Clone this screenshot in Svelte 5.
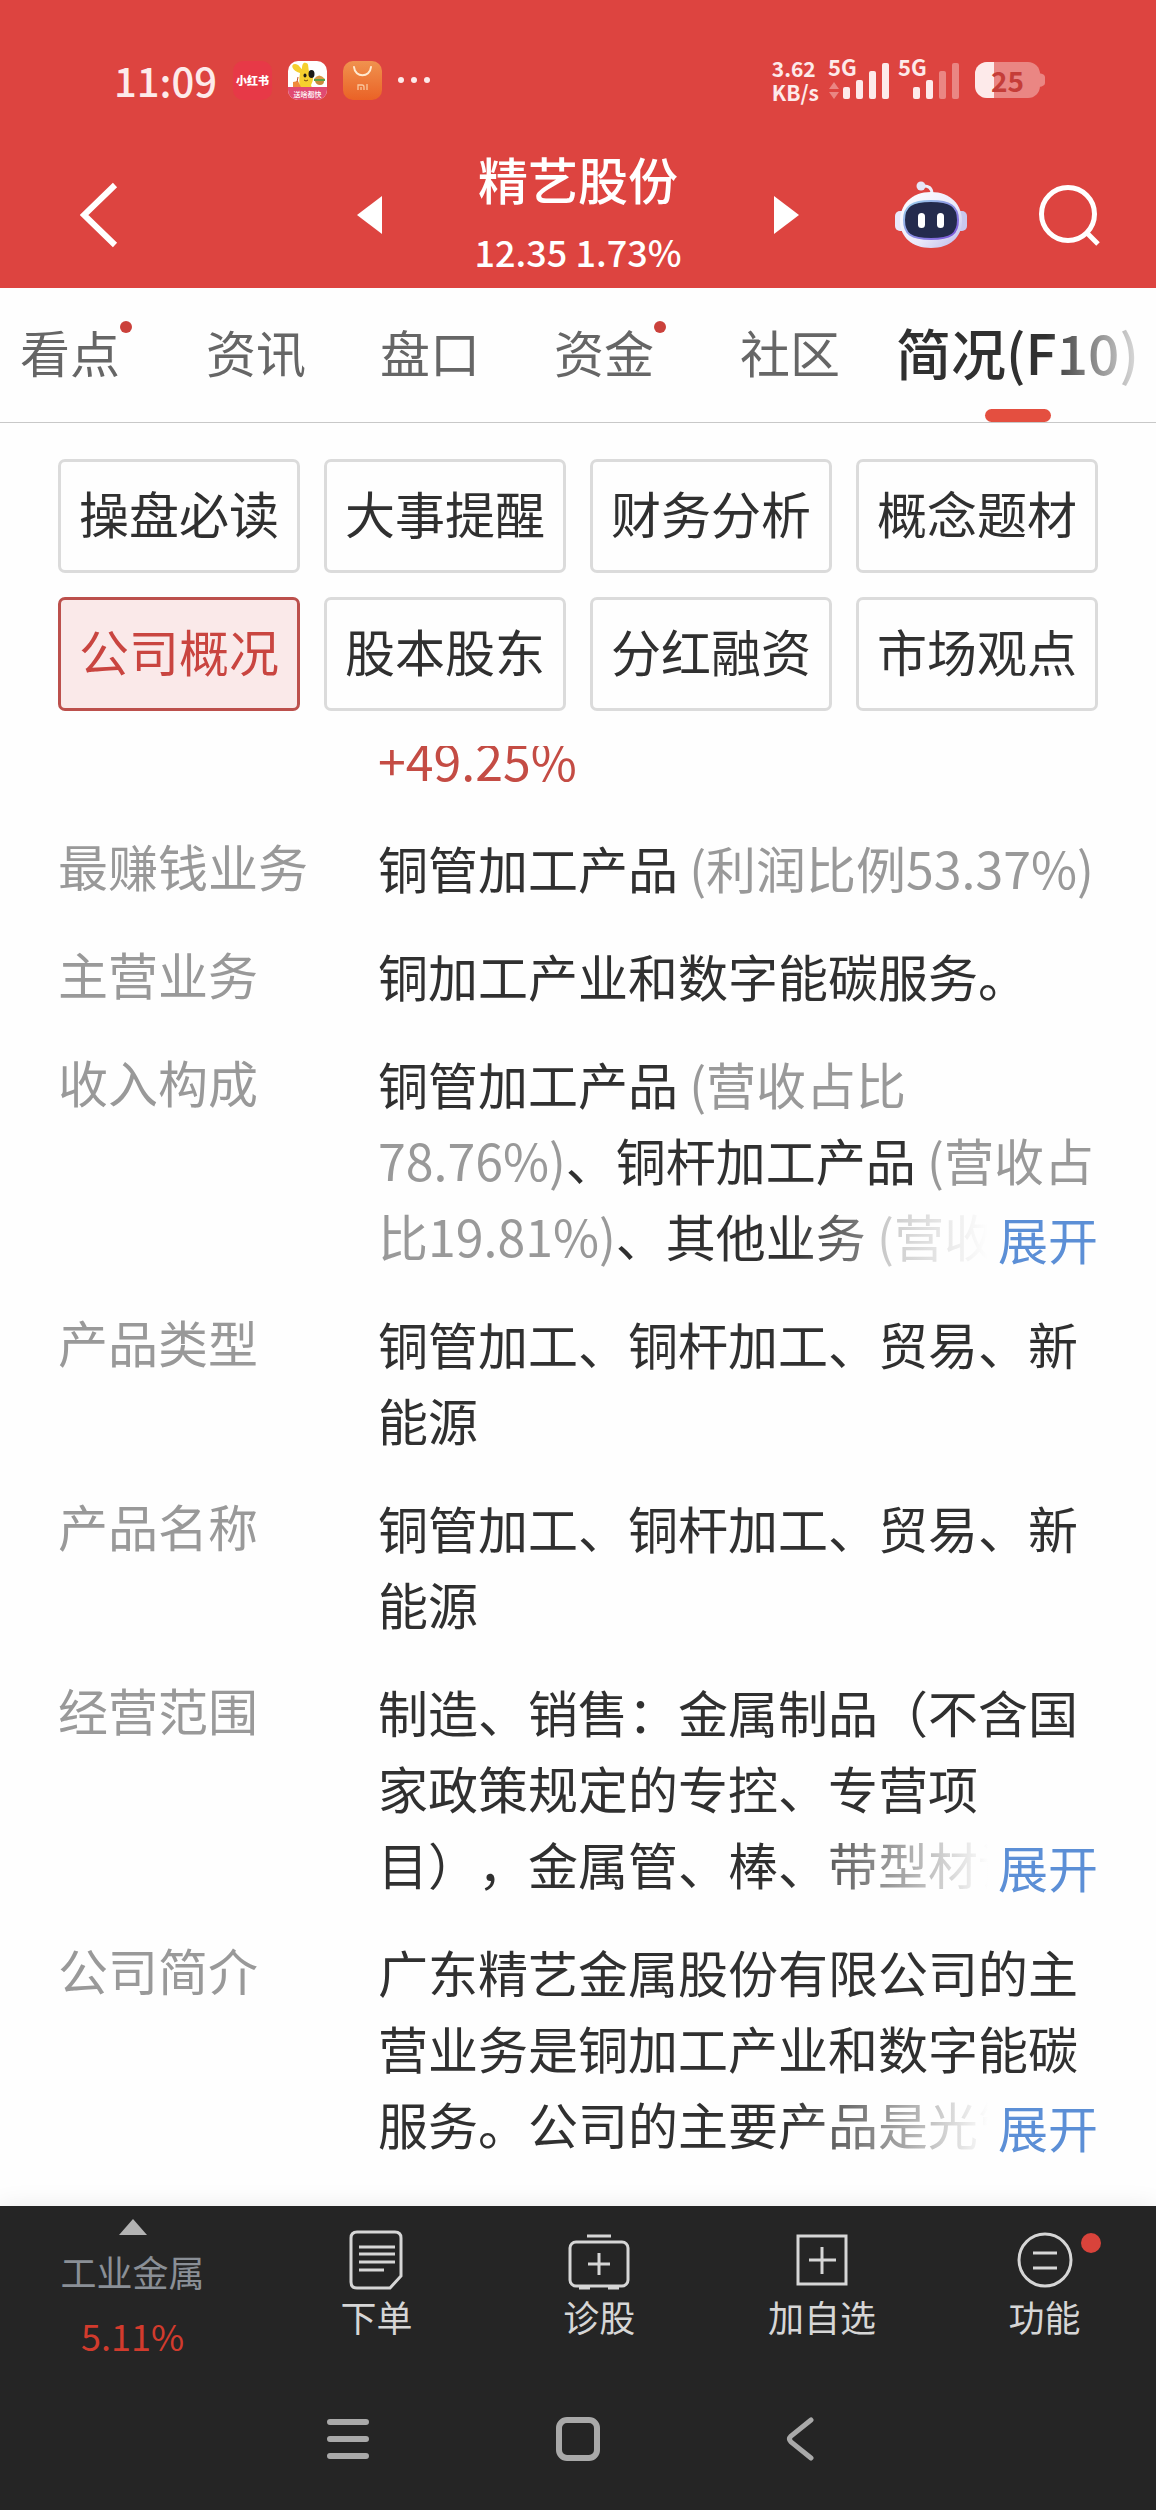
<script lang="ts">
  interface Part {
    text: string;
    muted?: boolean;
    up?: boolean;
  }

  interface Row {
    label: string;
    parts: Part[];
    more?: boolean;
  }

  const tabs = [
    { label: '看点', dot: true },
    { label: '资讯' },
    { label: '盘口' },
    { label: '资金', dot: true },
    { label: '社区' },
    { label: '简况(F10)' },
  ];

  const sections = [
    '操盘必读', '大事提醒', '财务分析', '概念题材',
    '公司概况', '股本股东', '分红融资', '市场观点',
  ];

  const rows: Row[] = [
    { label: '', parts: [{ text: '+49.25%', up: true }] },
    { label: '最赚钱业务', parts: [{ text: '铜管加工产品 ' }, { text: '(利润比例53.37%)', muted: true }] },
    { label: '主营业务', parts: [{ text: '铜加工产业和数字能碳服务。' }] },
    {
      label: '收入构成',
      parts: [
        { text: '铜管加工产品 ' },
        { text: '(营收占比78.76%)', muted: true },
        { text: '、铜杆加工产品 ' },
        { text: '(营收占比19.81%)', muted: true },
        { text: '、其他业务 ' },
        { text: '(营收占', muted: true },
      ],
      more: true,
    },
    { label: '产品类型', parts: [{ text: '铜管加工、铜杆加工、贸易、新能源' }] },
    { label: '产品名称', parts: [{ text: '铜管加工、铜杆加工、贸易、新能源' }] },
    {
      label: '经营范围',
      parts: [{ text: '制造、销售：金属制品（不含国家政策规定的专控、专营项目），金属管、棒、带型材设' }],
      more: true,
    },
    {
      label: '公司简介',
      parts: [{ text: '广东精艺金属股份有限公司的主营业务是铜加工产业和数字能碳服务。公司的主要产品是光管' }],
      more: true,
    },
  ];

  const signals = [4, 2];
  const bars = [12, 19, 28, 36];

  let activeTab = $state('简况(F10)');
  let activeSection = $state('公司概况');
  let expanded = $state<string[]>([]);
</script>

<div class="app">
  <header>
    <div class="status">
      <span class="time">11:09</span>
      <svg class="app-icon" viewBox="0 0 39 39" aria-hidden="true">
        <rect width="39" height="39" rx="10" fill="#e73947" />
        <text x="19.5" y="24" font-size="11" font-weight="900" fill="#fff" text-anchor="middle">小红书</text>
      </svg>
      <svg class="app-icon" viewBox="0 0 39 39" aria-hidden="true">
        <clipPath id="tile"><rect width="39" height="39" rx="10" /></clipPath>
        <g clip-path="url(#tile)">
          <rect width="39" height="39" fill="#fff" />
          <path d="M12 12C4 10 2 3 7 3c4 0 5 4 7 5 0-4 1-7 4-6 3 0 2 5 3 8 5 3 5 9 2 14l1 3H12c-1-5-1-9 0-15z" fill="#f6cf2e" />
          <ellipse cx="23.5" cy="13" rx="3" ry="4" fill="#1d1a17" />
          <ellipse cx="17" cy="14.5" rx="1.5" ry="2" fill="#1d1a17" />
          <path d="M16 19q2 2 4 0" fill="none" stroke="#7a4a10" stroke-width="1" />
          <path d="M5 21l5-1 3 6H5z" fill="#f08a3c" />
          <path d="M9 21l1-5" stroke="#c4502c" stroke-width="1" />
          <path d="M26 18q5-7 11 0z" fill="#d99a45" />
          <path d="M26 18h11v2H26z" fill="#58a04a" />
          <path d="M27 20h9q0 4-4 4t-5-4z" fill="#c98a3a" />
          <path d="M0 26h39v13H0z" fill="#e04a72" />
        </g>
        <text x="19.5" y="36" font-size="7" font-weight="500" fill="#fff" text-anchor="middle">送啥都快</text>
      </svg>
      <svg class="app-icon" viewBox="0 0 39 39" aria-hidden="true">
        <linearGradient id="bag" x2="0" y2="1">
          <stop stop-color="#f0924e" />
          <stop offset="1" stop-color="#ea6226" />
        </linearGradient>
        <rect width="39" height="39" rx="10" fill="url(#bag)" />
        <path d="M11 6c1 11 16 11 17 0" fill="none" stroke="#ffe9cf" stroke-width="2" stroke-linecap="round" />
        <path d="M15 29v-5h4q2 0 2 2v3M18 26v3M24 23v6" fill="none" stroke="#f9c89e" stroke-width="1.3" />
      </svg>
      <svg class="dots" viewBox="0 0 32 8" aria-hidden="true">
        <circle cx="3" cy="4" r="3" /><circle cx="16" cy="4" r="3" /><circle cx="29" cy="4" r="3" />
      </svg>
      <div class="speed"><span>3.62</span><span>KB/s</span></div>
      {#each signals as level, i}
        <svg class="signal" viewBox="0 0 62 56" aria-hidden="true">
          <text x="1" y="24" font-size="22" font-weight="700" fill="#fdeaea">5G</text>
          {#if i === 0}
            <path d="M2 37l5-7 5 7zM2 40h10l-5 7z" fill="#ea8683" />
          {/if}
          {#each bars as height, n}
            <rect
              x={16 + n * 13}
              y={47 - height}
              width="7"
              {height}
              rx="2"
              fill={n < level ? '#fdeaea' : '#ea8683'}
            />
          {/each}
        </svg>
      {/each}
      <div class="battery">
        <svg width="70" height="36" viewBox="0 0 70 36" aria-hidden="true">
          <clipPath id="cell"><rect width="65" height="36" rx="12" /></clipPath>
          <path d="M64 11q6 1 6 4v6q0 3-6 4z" fill="#ea8683" />
          <g clip-path="url(#cell)">
            <rect width="65" height="36" fill="#ea8683" />
            <rect width="19" height="36" fill="#fdeaea" />
          </g>
        </svg>
        <span class="level">25</span>
      </div>
    </div>

    <div class="titlebar">
      <button class="icon-btn" aria-label="返回">
        <svg width="38" height="66" viewBox="0 0 38 66">
          <path d="M35 3L4 33l31 30" fill="none" stroke="#fff" stroke-width="6" />
        </svg>
      </button>
      <div class="stock">
        <button class="icon-btn" aria-label="上一只">
          <svg width="25" height="38" viewBox="0 0 25 38"><path d="M25 0v38L0 19z" fill="#fff" /></svg>
        </button>
        <div class="stock-name">
          <h1>精艺股份</h1>
          <p>12.35 1.73%</p>
        </div>
        <button class="icon-btn" aria-label="下一只">
          <svg width="25" height="38" viewBox="0 0 25 38"><path d="M0 0v38l25-19z" fill="#fff" /></svg>
        </button>
      </div>
      <div class="actions">
        <button class="icon-btn" aria-label="智能助手">
          <svg width="72" height="68" viewBox="0 0 72 68">
            <defs>
              <linearGradient id="shell" x2="1" y2="1">
                <stop stop-color="#fff" />
                <stop offset=".6" stop-color="#eae9fa" />
                <stop offset="1" stop-color="#b9b8ea" />
              </linearGradient>
              <linearGradient id="rim" x2="1" y2="1">
                <stop stop-color="#9fd6ee" />
                <stop offset="1" stop-color="#7a4fd8" />
              </linearGradient>
            </defs>
            <path d="M27 5q10-1 10 8" fill="none" stroke="#eeeefa" stroke-width="3" />
            <circle cx="26" cy="5" r="4.5" fill="#e6e6f8" />
            <rect y="30" width="12" height="20" rx="5" fill="#e9e8fa" />
            <rect x="60" y="30" width="12" height="20" rx="5" fill="#c9c8ee" />
            <path d="M36 11c20 0 31 13 31 29S55 67 36 67 5 56 5 40s11-29 31-29z" fill="url(#shell)" />
            <path d="M36 20c19 0 27 5 27 19s-7 19-27 19S9 53 9 39s8-19 27-19z" fill="#242b4d" stroke="url(#rim)" stroke-width="2" />
            <rect x="23" y="32" width="7" height="15" rx="3.5" fill="#fff" />
            <rect x="42" y="32" width="7" height="15" rx="3.5" fill="#fff" />
          </svg>
        </button>
        <button class="icon-btn" aria-label="搜索">
          <svg width="61" height="61" viewBox="0 0 61 61">
            <circle cx="29" cy="29" r="26.5" fill="none" stroke="#fff" stroke-width="5" />
            <path d="M48 48l11 11" stroke="#fff" stroke-width="5" />
          </svg>
        </button>
      </div>
    </div>
  </header>

  <nav class="tabs">
    {#each tabs as tab}
      <button class="tab" class:active={activeTab === tab.label} onclick={() => { activeTab = tab.label; }}>
        {tab.label}
        {#if tab.dot}<span class="dot"></span>{/if}
      </button>
    {/each}
  </nav>

  <div class="sections">
    {#each sections as name}
      <button class="section" class:active={activeSection === name} onclick={() => { activeSection = name; }}>
        {name}
      </button>
    {/each}
  </div>

  <main>
    <dl>
      {#each rows as row}
        <div class="row">
          <dt>{row.label}</dt>
          <dd>
            {#each row.parts as part}<span class:muted={part.muted} class:up={part.up}>{part.text}</span>{/each}
            {#if row.more && !expanded.includes(row.label)}
              <button class="more" onclick={() => { expanded = [...expanded, row.label]; }}>展开</button>
            {/if}
          </dd>
        </div>
      {/each}
    </dl>
  </main>

  <footer>
    <div class="toolbar">
      <button class="sector">
        <svg width="28" height="16" viewBox="0 0 28 16" aria-hidden="true"><path d="M14 0l14 16H0z" fill="#b3b3b3" /></svg>
        <span class="sector-name">工业金属</span>
        <span class="sector-change">5.11%</span>
      </button>
      <button class="tool">
        <svg viewBox="0 0 64 64" aria-hidden="true">
          <path d="M13 4h38q6 0 6 6v38L46 60H13q-6 0-6-6V10q0-6 6-6z" />
          <path d="M15 19h36M15 26h36M15 34h36M15 42h25" />
        </svg>
        下单
      </button>
      <button class="tool">
        <svg viewBox="0 0 64 64" aria-hidden="true">
          <rect x="3" y="14" width="58" height="44" rx="6" />
          <path d="M20 8h24M32 25v22M21 36h22M12 60h11M41 60h11" />
        </svg>
        诊股
      </button>
      <button class="tool">
        <svg viewBox="0 0 64 64" aria-hidden="true">
          <rect x="8" y="8" width="48" height="48" />
          <path d="M32 19v27M19 32h27" />
        </svg>
        加自选
      </button>
      <button class="tool">
        <svg viewBox="0 0 64 64" aria-hidden="true">
          <circle cx="32" cy="32" r="26" />
          <path d="M20 25h24M20 40h24" />
        </svg>
        功能
        <span class="badge"></span>
      </button>
    </div>
    <div class="system">
      <button class="icon-btn" aria-label="最近任务">
        <svg width="44" height="44" viewBox="0 0 44 44">
          <path d="M4 5h36M4 22h36M4 39h36" fill="none" stroke="#a9a9a9" stroke-width="6" stroke-linecap="round" />
        </svg>
      </button>
      <button class="icon-btn" aria-label="主屏幕">
        <svg width="44" height="44" viewBox="0 0 44 44">
          <rect x="3" y="3" width="38" height="38" rx="8" fill="none" stroke="#a9a9a9" stroke-width="6" />
        </svg>
      </button>
      <button class="icon-btn" aria-label="返回上级">
        <svg width="28" height="44" viewBox="0 0 28 44">
          <path d="M25 3L5 19q-3 3 0 6l20 16" fill="none" stroke="#a9a9a9" stroke-width="5" stroke-linecap="round" />
        </svg>
      </button>
    </div>
  </footer>
</div>

<style>
  :global(body) {
    margin: 0;
    background: #fefefe;
  }

  .app {
    font-family: "Noto Sans CJK SC", "Noto Sans", sans-serif;
    font-size: 50px;
    color: #303030;
    text-spacing-trim: space-all;
    overflow: hidden;
  }

  button {
    margin: 0;
    padding: 0;
    border: none;
    background: none;
    font: inherit;
    color: inherit;
    cursor: pointer;
  }

  svg {
    display: block;
    flex: none;
  }

  header {
    background: #dd4440;
    color: #fff;
  }

  .status {
    display: flex;
    align-items: center;
    gap: 16px;
    height: 124px;
    padding: 18px 111px 0 114px;
  }

  .time {
    font-size: 40px;
    line-height: 48px;
    font-weight: 500;
    color: #fdeaea;
  }

  .app-icon {
    width: 39px;
    height: 39px;
  }

  .dots {
    width: 32px;
    height: 8px;
    fill: #fdeaea;
  }

  .speed {
    display: flex;
    flex-direction: column;
    margin-left: auto;
    font-size: 21px;
    line-height: 24px;
    font-weight: 700;
    color: #fdeaea;
  }

  .signal {
    width: 62px;
    height: 56px;
    margin-left: -8px;
  }

  .battery {
    position: relative;
    font-size: 28px;
    line-height: 36px;
    font-weight: 700;
    color: #c53d38;
  }

  .level {
    position: absolute;
    inset: 0 5px 0 0;
    text-align: center;
  }

  .titlebar {
    display: grid;
    grid-template-columns: 1fr auto 1fr;
    align-items: center;
    padding: 0 56px 0 80px;
  }

  .titlebar > .icon-btn {
    justify-self: start;
  }

  .stock {
    display: flex;
    align-items: center;
    gap: 92px;
    margin-left: -24px;
  }

  .stock-name {
    text-align: center;
  }

  h1 {
    margin: 0;
    font-size: 50px;
    line-height: 72px;
    font-weight: 500;
  }

  p {
    margin: 0;
    font-size: 36px;
    line-height: 74px;
    font-weight: 500;
  }

  .actions {
    display: flex;
    align-items: center;
    justify-content: flex-end;
    gap: 72px;
  }

  .tabs {
    position: relative;
    display: flex;
    gap: 74px;
    height: 134px;
    padding-left: 20px;
    border-bottom: 1px solid #c8c8c8;
    overflow: hidden;
  }

  .tabs::after {
    content: "";
    position: absolute;
    top: 0;
    right: 0;
    width: 110px;
    height: 100px;
    background: linear-gradient(to right, rgba(254, 254, 254, 0), #fefefe);
    pointer-events: none;
  }

  .tab {
    position: relative;
    display: flex;
    flex: none;
    align-items: center;
    padding-bottom: 8px;
    color: #666;
    white-space: nowrap;
  }

  .tab.active {
    margin: 0 -18px;
    font-size: 55px;
    font-weight: 500;
    color: #303030;
  }

  .tab.active::after {
    content: "";
    position: absolute;
    left: 50%;
    bottom: 0;
    width: 66px;
    height: 13px;
    margin-left: -33px;
    border-radius: 7px;
    background: #e44f40;
  }

  .dot {
    align-self: flex-start;
    width: 12px;
    height: 12px;
    margin-top: 33px;
    border-radius: 50%;
    background: #cb413b;
  }

  .sections {
    display: grid;
    grid-template-columns: repeat(4, 1fr);
    gap: 24px;
    padding: 36px 58px 35px;
  }

  .section {
    padding: 14px 0 22px;
    border: 3px solid #dbdbdb;
    border-radius: 7px;
    line-height: 72px;
    white-space: nowrap;
  }

  .section.active {
    border-color: #bc504c;
    background: #fae9e9;
    color: #c94540;
  }

  /* the list is scrolled, its first visible row is cut by the section grid */
  main {
    overflow: hidden;
  }

  dl {
    display: flex;
    flex-direction: column;
    gap: 32px;
    margin: -25px 0 0;
    padding: 0 58px 45px;
  }

  .row {
    display: grid;
    grid-template-columns: 320px 1fr;
  }

  dt {
    line-height: 72px;
    color: #999;
  }

  dd {
    position: relative;
    margin: 0;
    line-height: 76px;
  }

  .muted {
    color: #999;
  }

  .up {
    color: #c44c44;
  }

  .more {
    position: absolute;
    right: 0;
    bottom: 0;
    padding-left: 210px;
    line-height: 70px;
    color: #5c8fd6;
    background: linear-gradient(to right, rgba(254, 254, 254, 0), #fefefe 200px);
  }

  footer {
    position: relative;
    background: #252525;
    box-shadow: 0 0 24px rgba(0, 0, 0, 0.08);
  }

  .toolbar {
    display: grid;
    grid-template-columns: 119fr repeat(4, 100fr);
    align-items: start;
    font-size: 36px;
    color: #d6d6d6;
  }

  .sector {
    display: flex;
    flex-direction: column;
    align-items: center;
    padding-top: 13px;
    line-height: 64px;
  }

  .sector-name {
    margin-top: 4px;
    color: #8a8f96;
  }

  .sector-change {
    color: #d23b2d;
  }

  .tool {
    position: relative;
    display: flex;
    flex-direction: column;
    align-items: center;
    padding-top: 22px;
    line-height: 48px;
  }

  .tool svg {
    width: 64px;
    height: 64px;
    fill: none;
    stroke: #d6d6d6;
    stroke-width: 3px;
  }

  .badge {
    position: absolute;
    top: 27px;
    left: 50%;
    width: 20px;
    height: 20px;
    margin-left: 36px;
    border-radius: 50%;
    background: #d9433b;
  }

  .system {
    display: flex;
    justify-content: center;
    align-items: center;
    gap: 186px;
    height: 143px;
    padding-right: 16px;
  }
</style>
